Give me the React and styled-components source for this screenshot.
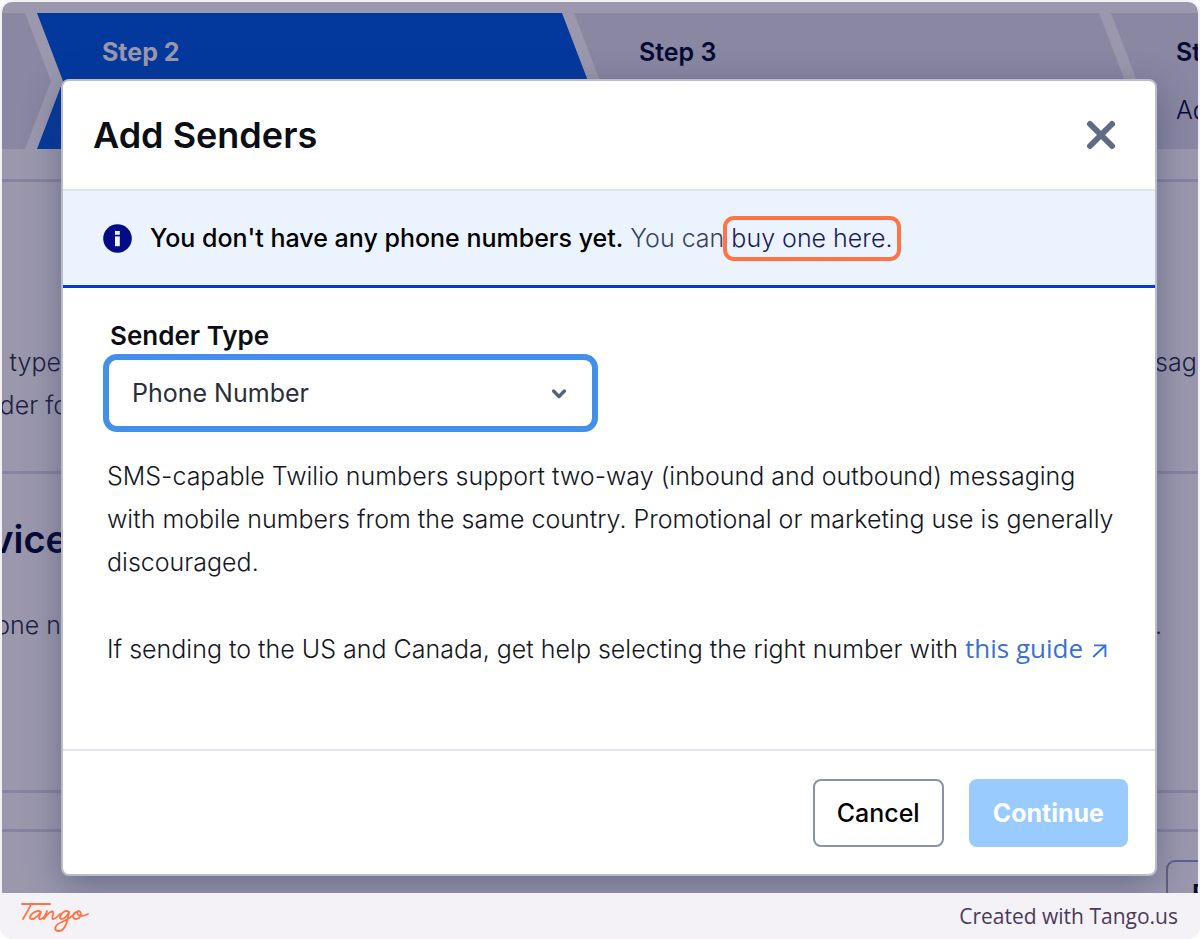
import React, { useState } from "react";
import styled, { createGlobalStyle, css } from "styled-components";

const GlobalStyle = createGlobalStyle`
  * {
    box-sizing: border-box;
  }
  body {
    margin: 0;
    background: #ffffff;
    font-family: Inter, "Liberation Sans", sans-serif;
    color: #121c2d;
  }
  h1, h2, p {
    margin: 0;
  }
`;

const Frame = styled.div`
  min-height: 100vh;
  display: flex;
  flex-direction: column;
  padding: 2px 2px 0;
  background: #f4f2f7;
  border-radius: 12px;
`;

// Page and dialog share one grid cell, so the dialog sits on top of the page
const Stage = styled.main`
  flex: 1;
  display: grid;
  grid-template-columns: minmax(0, 1fr);
  background: #9b98ae;
  border-radius: 10px 10px 0 0;
  overflow: hidden;
`;

const Page = styled.div`
  grid-area: 1 / 1;
  min-width: 0;
  display: flex;
  flex-direction: column;
  padding-top: 11px;
  overflow: hidden;
`;

const Steps = styled.div`
  display: flex;
  height: 136px;
  margin-bottom: 30px;
`;

const Step = styled.div`
  flex: 0 0 551px;
  margin-right: -14px;
  padding: 24px 0 0 65px;
  display: flex;
  flex-direction: column;
  gap: 28px;
  font-size: 25px;
  font-weight: 300;
  line-height: 30px;
  color: #050a35;
  background: #8987a2;
  clip-path: polygon(0 0, calc(100% - 26px) 0, 100% 50%, calc(100% - 26px) 100%, 0 100%, 26px 50%);

  ${(props) =>
    props.$first &&
    css`
      flex-basis: 49px;
      padding: 0;
      clip-path: polygon(0 0, calc(100% - 26px) 0, 100% 50%, calc(100% - 26px) 100%, 0 100%);
    `}

  ${(props) =>
    props.$active &&
    css`
      color: #9b98ae;
      background: #03399d;
    `}
`;

const StepName = styled.strong`
  font-weight: ${(props) => (props.$current ? 700 : 600)};
`;

const Section = styled.section`
  display: flex;
  justify-content: space-between;
  height: ${(props) => props.$height}px;
  padding-top: ${(props) => props.$top}px;
  border-top: 3px solid #8784a0;
  font-size: 25px;
  font-weight: 300;
  line-height: 43px;
  color: #1c1e40;
  white-space: nowrap;
`;

// Text runs out of the left edge of the page
const LeftText = styled.div`
  width: 66px;
  display: flex;
  flex-direction: column;
  align-items: flex-end;
  gap: ${(props) => props.$gap || 0}px;
`;

const RightText = styled.div`
  width: 43px;
  display: flex;
  flex-direction: column;
  gap: ${(props) => props.$gap || 0}px;
`;

const SectionTitle = styled.h2`
  font-size: 38px;
  font-weight: 600;
  line-height: 44px;
  color: #050a35;
`;

const BackButton = styled.button`
  align-self: flex-start;
  margin: 28px -60px 0 auto;
  width: 92px;
  height: 68px;
  padding: 0 24px;
  text-align: left;
  font: 600 25px Inter, sans-serif;
  color: #050a35;
  background: none;
  border: 2px solid #5f608a;
  border-radius: 9px;
`;

const Dialog = styled.div`
  grid-area: 1 / 1;
  z-index: 1;
  margin: 77px 41px 17px 59px;
  display: flex;
  flex-direction: column;
  background: #ffffff;
  border: 2px solid #b9bccd;
  border-radius: 8px;
  box-shadow: 0 10px 36px rgba(40, 50, 85, 0.42);
`;

const DialogHeader = styled.header`
  display: flex;
  justify-content: space-between;
  align-items: center;
  height: 110px;
  padding: 0 38px 0 30px;
  border-bottom: 2px solid #e1e3ea;
`;

const DialogTitle = styled.h1`
  font-size: 36px;
  font-weight: 600;
  line-height: 44px;
  color: #0b0e14;
`;

const CloseButton = styled.button`
  display: flex;
  padding: 0;
  color: #606b85;
  background: none;
  border: none;
  cursor: pointer;
`;

const Callout = styled.div`
  display: flex;
  align-items: center;
  gap: 18px;
  height: 97px;
  padding: 0 40px;
  font-size: 25px;
  font-weight: 300;
  line-height: 32px;
  color: #38425c;
  background: #ebf3ff;
  border-bottom: 3px solid #0d35dc;
`;

const CalloutText = styled.p`
  b {
    font-weight: 500;
    color: #000000;
  }
`;

const BuyLink = styled.a`
  position: relative;
  color: #1c1c5c;
  text-decoration: none;

  &::after {
    content: "";
    position: absolute;
    inset: -7px -9px -8px -8px;
    border: 4px solid #ff7442;
    border-radius: 11px;
  }
`;

const DialogBody = styled.div`
  flex: 1;
  display: flex;
  flex-direction: column;
  align-items: flex-start;
  padding: 30px 32px 0 40px;
`;

const Label = styled.label`
  padding-left: 7px;
  font-size: 26px;
  font-weight: 600;
  line-height: 36px;
  color: #0b0e14;
`;

const SelectWrapper = styled.div`
  position: relative;
  width: 495px;
  max-width: 100%;
  margin-bottom: 23px;

  svg {
    position: absolute;
    right: 31px;
    top: 34px;
    pointer-events: none;
  }
`;

const Select = styled.select`
  display: block;
  width: 100%;
  height: 78px;
  padding: 0 23px;
  appearance: none;
  font: 400 25px Inter, sans-serif;
  color: #2a2e38;
  background: #ffffff;
  border: 6px solid #4390ea;
  border-radius: 14px;
  outline: none;
`;

const HelpText = styled.p`
  margin-bottom: 43px;
  padding-left: 4px;
  font-size: 25px;
  font-weight: 300;
  line-height: 43px;
  color: #14171f;
`;

const GuideLink = styled.a`
  font-family: "Open Sans", sans-serif;
  font-size: 26px;
  font-weight: 400;
  color: #3a70d4;
  text-decoration: none;

  svg {
    margin-left: 9px;
  }
`;

const DialogFooter = styled.footer`
  display: flex;
  justify-content: flex-end;
  align-items: center;
  gap: 25px;
  height: 125px;
  padding: 0 27px;
  border-top: 2px solid #e1e3ea;
`;

const Button = styled.button`
  height: 68px;
  padding: 0 22px;
  font: 500 25px Inter, sans-serif;
  color: #000000;
  background: #ffffff;
  border: 2px solid #8b91a9;
  border-radius: 8px;
  cursor: pointer;

  &:disabled {
    font-weight: 700;
    color: #ffffff;
    background: #99cbff;
    border-color: #99cbff;
    cursor: default;
  }
`;

const Credit = styled.footer`
  display: flex;
  justify-content: space-between;
  align-items: center;
  height: 46px;
  padding: 0 20px 0 18px;
  font-family: "Open Sans", sans-serif;
  font-size: 21px;
  line-height: 28px;
  color: #4a3a5a;
`;

function CloseIcon() {
  return (
    <svg width="32" height="32" viewBox="0 0 32 32" fill="none" stroke="currentColor" strokeWidth="6" strokeLinecap="round">
      <path d="M5 5L27 27M27 5L5 27" />
    </svg>
  );
}

function InfoIcon() {
  return (
    <svg width="29" height="29" viewBox="0 0 29 29">
      <circle cx="14.5" cy="14.5" r="14.3" fill="#030b86" />
      <rect x="12" y="7" width="4.8" height="3.8" fill="#ebf3ff" />
      <rect x="12" y="12.4" width="4.8" height="9.8" fill="#ebf3ff" />
    </svg>
  );
}

function ChevronIcon() {
  return (
    <svg width="16" height="12" viewBox="0 0 16 12" fill="none" stroke="#56617f" strokeWidth="3.4" strokeLinecap="round" strokeLinejoin="round">
      <path d="M2.6 3L8 8.6L13.4 3" />
    </svg>
  );
}

function ExternalIcon() {
  return (
    <svg width="15" height="14" viewBox="0 0 15 14" fill="none" stroke="currentColor" strokeWidth="1.9">
      <path d="M2 1.4H13.4V13M13 1.8L1.2 13" />
    </svg>
  );
}

function TangoLogo() {
  return (
    <svg width="70" height="34" viewBox="0 0 70 34" fill="none" stroke="#ff7442" strokeWidth="1.8" strokeLinecap="round" strokeLinejoin="round">
      <path d="M2 5H30" />
      <path d="M11 5C9 11 5 16 3 20" />
      <path d="M21 13C17 10 10 15 10 19C11 22 17 19 21 13C19 18 18 21 21 20C24 19 26 15 27 12C27 15 25 18 24 20C27 15 32 11 33 13C34 15 31 20 33 20C36 20 38 17 40 15" />
      <path d="M49 13C45 10 40 15 40 19C42 22 47 18 49 13C48 20 46 32 39 32C33 32 34 26 42 23C49 20 53 17 56 13C52 15 52 20 56 20C61 20 62 13 59 12C56 12 57 17 61 17C64 17 66 16 68 15" />
    </svg>
  );
}

export default function App() {
  const [senderType, setSenderType] = useState("phone");

  return (
    <>
      <GlobalStyle />
      <Frame>
        <Stage>
          <Page>
            <Steps>
              <Step $first />
              <Step $active>
                <StepName $current>Step 2</StepName>
              </Step>
              <Step>
                <StepName>Step 3</StepName>
              </Step>
              <Step>
                <StepName>Step 4</StepName>
                <span>Add</span>
              </Step>
            </Steps>
            <Section $height={292} $top={159}>
              <LeftText>
                <span>type&nbsp;</span>
                <span>nder fo</span>
              </LeftText>
              <RightText>sag</RightText>
            </Section>
            <Section $height={319} $top={43}>
              <LeftText $gap={43}>
                <SectionTitle>vice</SectionTitle>
                <span>one n&nbsp;</span>
              </LeftText>
              <RightText $gap={43}>
                <SectionTitle>&nbsp;</SectionTitle>
                <span>.</span>
              </RightText>
            </Section>
            <Section $height={39} $top={0} />
            <Section $height={62} $top={0}>
              <BackButton type="button">F</BackButton>
            </Section>
          </Page>

          <Dialog role="dialog" aria-labelledby="dialog-title">
            <DialogHeader>
              <DialogTitle id="dialog-title">Add Senders</DialogTitle>
              <CloseButton type="button" aria-label="Close">
                <CloseIcon />
              </CloseButton>
            </DialogHeader>
            <Callout>
              <InfoIcon />
              <CalloutText>
                <b>You don't have any phone numbers yet.</b> You can <BuyLink href="#buy">buy one here.</BuyLink>
              </CalloutText>
            </Callout>
            <DialogBody>
              <Label htmlFor="sender-type">Sender Type</Label>
              <SelectWrapper>
                <Select id="sender-type" value={senderType} onChange={(e) => setSenderType(e.target.value)}>
                  <option value="phone">Phone Number</option>
                </Select>
                <ChevronIcon />
              </SelectWrapper>
              <HelpText>
                SMS-capable Twilio numbers support two-way (inbound and outbound) messaging with mobile numbers from
                the same country. Promotional or marketing use is generally discouraged.
              </HelpText>
              <HelpText>
                If sending to the US and Canada, get help selecting the right number with{" "}
                <GuideLink href="#guide">
                  this guide
                  <ExternalIcon />
                </GuideLink>
              </HelpText>
            </DialogBody>
            <DialogFooter>
              <Button type="button">Cancel</Button>
              <Button type="button" disabled>
                Continue
              </Button>
            </DialogFooter>
          </Dialog>
        </Stage>
        <Credit>
          <TangoLogo />
          <span>Created with Tango.us</span>
        </Credit>
      </Frame>
    </>
  );
}
